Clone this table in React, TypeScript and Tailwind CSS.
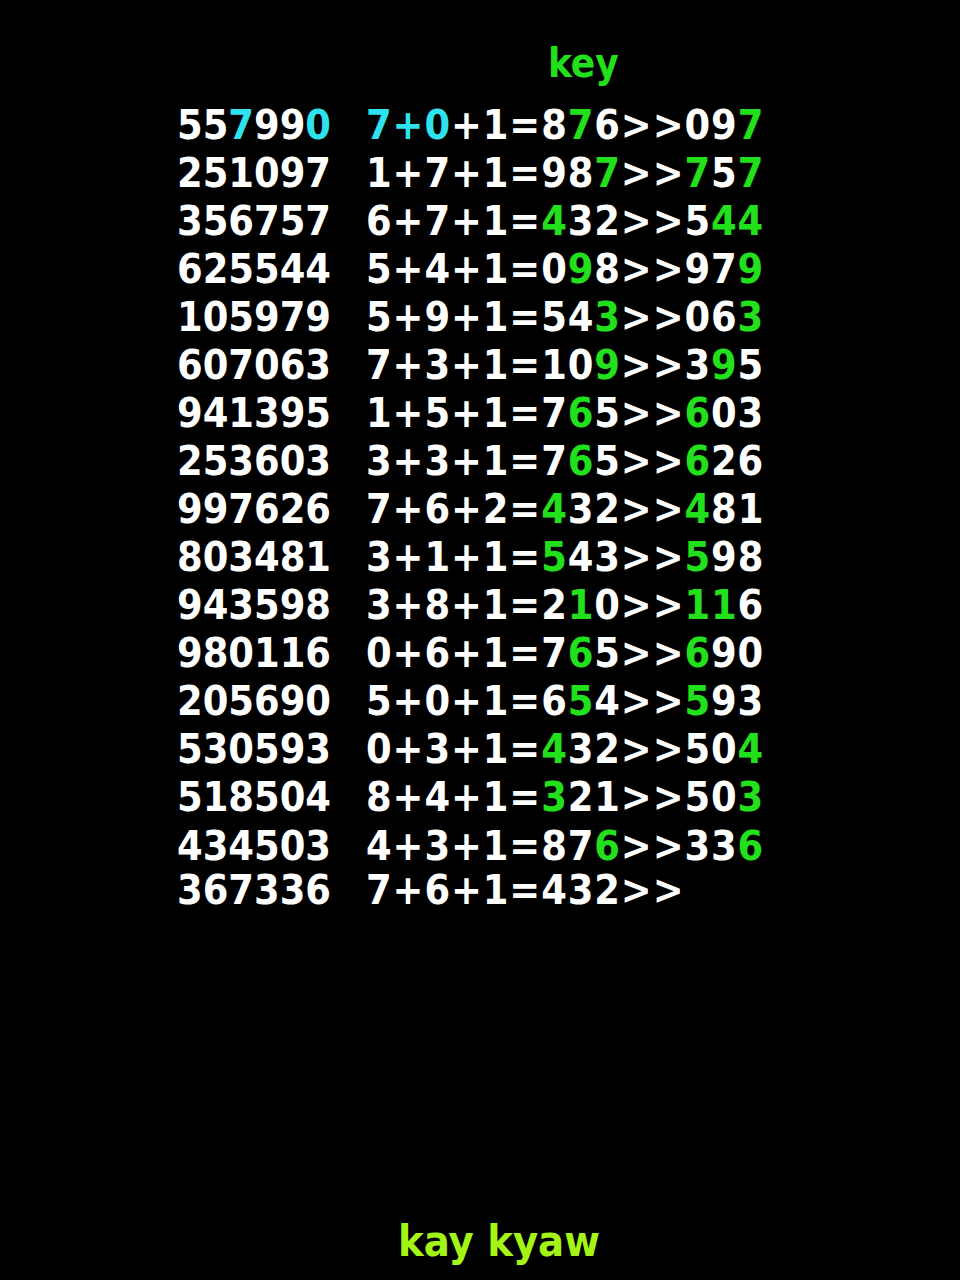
import React from 'react'

// {x} = green, [x] = cyan
const rows: [string, string][] = [
  ['55[7]99[0]', '[7+0]+1=8{7}6>>09{7}'],
  ['251097', '1+7+1=98{7}>>{7}5{7}'],
  ['356757', '6+7+1={4}32>>5{44}'],
  ['625544', '5+4+1=0{9}8>>97{9}'],
  ['105979', '5+9+1=54{3}>>06{3}'],
  ['607063', '7+3+1=10{9}>>3{9}5'],
  ['941395', '1+5+1=7{6}5>>{6}03'],
  ['253603', '3+3+1=7{6}5>>{6}26'],
  ['997626', '7+6+2={4}32>>{4}81'],
  ['803481', '3+1+1={5}43>>{5}98'],
  ['943598', '3+8+1=2{1}0>>{11}6'],
  ['980116', '0+6+1=7{6}5>>{6}90'],
  ['205690', '5+0+1=6{5}4>>{5}93'],
  ['530593', '0+3+1={4}32>>50{4}'],
  ['518504', '8+4+1={3}21>>50{3}'],
  ['434503', '4+3+1=87{6}>>33{6}'],
  ['367336', '7+6+1=432>>'],
]

function Marked({ text }: { text: string }) {
  const parts = text.split(/(\{[^}]*\}|\[[^\]]*\])/).filter(Boolean)
  return (
    <>
      {parts.map((p, i) => {
        if (p.startsWith('{')) return <span key={i} className="text-[#22e01c]">{p.slice(1, -1)}</span>
        if (p.startsWith('[')) return <span key={i} className="text-[#2fe3ee]">{p.slice(1, -1)}</span>
        return <span key={i}>{p}</span>
      })}
    </>
  )
}

export default function App() {
  return (
    <div
      className="w-[960px] h-[1280px] bg-black flex flex-col text-white font-bold"
      style={{ fontFamily: '"DejaVu Sans Condensed", "DejaVu Sans", sans-serif' }}
    >
      <div className="pl-[548px] pt-[39px] h-[101px] text-[40px] leading-[48px] text-[#22e01c]">key</div>

      <div className="pl-[177px] text-[41px]">
        {rows.map(([num, eq], i) => (
          <div
            key={num}
            className={`flex ${i === rows.length - 1 ? 'leading-[38px]' : i === rows.length - 2 ? 'leading-[50px]' : 'leading-[48px]'}`}
          >
            <div className="w-[189px]">
              <Marked text={num} />
            </div>
            <div className="tracking-[0.9px]">
              <Marked text={eq} />
            </div>
          </div>
        ))}
      </div>

      <div className="mt-auto pb-[14px] pl-[398px] text-[43px] leading-[50px] text-[#a4f416]">kay kyaw</div>
    </div>
  )
}
